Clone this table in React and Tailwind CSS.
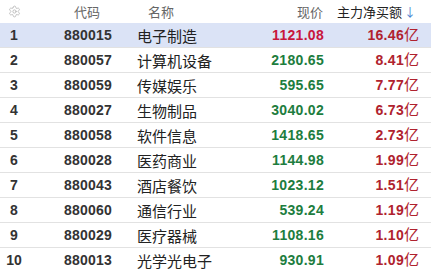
import React from 'react';
import { Settings } from 'lucide-react';

const rows = [
  { code: '880015', name: '电子制造', price: '1121.08', up: true, amt: '16.46' },
  { code: '880057', name: '计算机设备', price: '2180.65', up: false, amt: '8.41' },
  { code: '880059', name: '传媒娱乐', price: '595.65', up: false, amt: '7.77' },
  { code: '880027', name: '生物制品', price: '3040.02', up: false, amt: '6.73' },
  { code: '880058', name: '软件信息', price: '1418.65', up: false, amt: '2.73' },
  { code: '880028', name: '医药商业', price: '1144.98', up: false, amt: '1.99' },
  { code: '880043', name: '酒店餐饮', price: '1023.12', up: false, amt: '1.51' },
  { code: '880060', name: '通信行业', price: '539.24', up: false, amt: '1.19' },
  { code: '880029', name: '医疗器械', price: '1108.16', up: false, amt: '1.10' },
  { code: '880013', name: '光学光电子', price: '930.91', up: false, amt: '1.09' },
];

const cols = 'grid grid-cols-[28px_109px_110px_77px_95px_12px] items-center';
const cjk = { fontFamily: '"Noto Sans CJK SC", "Liberation Sans", sans-serif' };

export default function App() {
  return (
    <div className="w-[431px] h-[272px] overflow-hidden bg-white font-['Liberation_Sans','Noto_Sans_CJK_SC',sans-serif]">
      {/* header */}
      <div className={`${cols} h-[23px] text-[13px] text-[#666]`}>
        <div className="flex justify-center pl-[1px]">
          <Settings size={13} strokeWidth={1.6} className="text-[#b8b8b8]" />
        </div>
        <div className="pl-[46px]" style={cjk}>代码</div>
        <div className="pl-[11px]" style={cjk}>名称</div>
        <div className="text-right pr-[1px]" style={cjk}>现价</div>
        <div className="col-span-2 flex justify-end items-center pr-[15px] text-[#222]" style={cjk}>
          主力净买额<span className="ml-[2px] text-[12px] text-[#4a7fd0]">↓</span>
        </div>
      </div>
      {rows.map((r, i) => (
        <div
          key={r.code}
          className={`${cols} h-[25px] border-b border-[#e2e2e2] ${i === 0 ? 'bg-[#dbe3f6]' : 'bg-white'}`}
        >
          <div className="text-center text-[14px] font-bold text-[#333]">{i + 1}</div>
          <div className="pl-[36px] text-[14px] font-bold text-[#333] tracking-[0.2px]">{r.code}</div>
          <div className="text-[15px] text-[#222] leading-none" style={cjk}>{r.name}</div>
          <div className={`text-right text-[14px] font-bold tracking-[0.3px] ${r.up ? 'text-[#c8163c]' : 'text-[#1d7d3e]'}`}>{r.price}</div>
          <div className="flex justify-end items-baseline text-[#b0222e]">
            <span className="text-[14px] font-bold tracking-[0.3px]">{r.amt}</span>
            <span className="text-[15px] leading-none" style={cjk}>亿</span>
          </div>
          <div></div>
        </div>
      ))}
    </div>
  );
}
